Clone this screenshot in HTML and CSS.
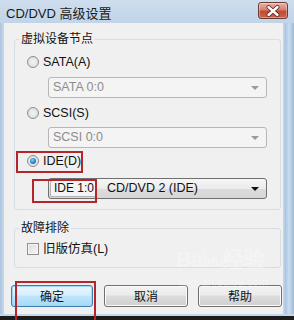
FILE: index.html
```html
<!DOCTYPE html>
<html lang="zh-CN">
<head>
<meta charset="utf-8">
<title>CD/DVD 高级设置</title>
<link rel="stylesheet" href="styles.css">
</head>
<body>
<div class="window">
  <div class="titlebar">
    <span class="title">CD/DVD 高级设置</span>
    <span class="close">
      <svg width="30" height="16" viewBox="0 0 30 16">
        <path d="M10.5 4 L19.5 12 M19.5 4 L10.5 12" stroke="#5a1e1a" stroke-width="4" stroke-linecap="round"/>
        <path d="M10.5 4 L19.5 12 M19.5 4 L10.5 12" stroke="#ffffff" stroke-width="2.4" stroke-linecap="round"/>
      </svg>
    </span>
  </div>
  <div class="client">
    <fieldset class="group g1">
      <legend>虚拟设备节点</legend>
      <label class="opt o1"><span class="radio"></span>SATA(A)</label>
      <div class="combo disabled c1"><span class="ctext">SATA 0:0</span><span class="arrow"></span></div>
      <label class="opt o2"><span class="radio"></span>SCSI(S)</label>
      <div class="combo disabled c2"><span class="ctext">SCSI 0:0</span><span class="arrow"></span></div>
      <label class="opt o3"><span class="radio on"></span>IDE(D)</label>
      <div class="combo c3"><span class="seg">IDE 1:0</span><span class="ctext dev">CD/DVD 2 (IDE)</span><span class="arrow"></span></div>
    </fieldset>
    <fieldset class="group g2">
      <legend>故障排除</legend>
      <label class="opt o4"><span class="check"></span>旧版仿真(L)</label>
    </fieldset>
    <div class="buttons">
      <button class="btn ok">确定</button>
      <button class="btn cancel">取消</button>
      <button class="btn help">帮助</button>
    </div>
  </div>
  <div class="bottom"></div>
  <div class="watermark"><span class="wm-big">Bai<span class="paw">du</span>经验</span><span class="wm-small">jingyan.baidu.com</span></div>
  <div class="mark m1"></div>
  <div class="mark m2"></div>
  <div class="mark m3"></div>
</div>
</body>
</html>
```
FILE: styles.css
```css
* { box-sizing: border-box; }
html, body { margin: 0; padding: 0; background: #bcd3ea; }
body { font-family: "Liberation Sans", "Noto Sans CJK SC", sans-serif; font-size: 12px; color: #111; }

.window {
  position: relative;
  width: 294px;
  height: 320px;
  display: flex;
  flex-direction: column;
  background: linear-gradient(90deg, #a9c2dc 0, #c3d6ea 3px, #c3d6ea 284px, #a8c4e0 285px, #c9dcef 289px, #9fb9d4 294px);
  overflow: hidden;
}

.titlebar {
  height: 23px;
  flex: none;
  display: flex;
  align-items: center;
  justify-content: space-between;
  padding-left: 6px;
  padding-right: 6px;
  background: linear-gradient(#cfdeee, #c0d3e8);
}
.title { font-size: 13px; color: #1a1a1a; margin-top: 1px; }
.close {
  width: 30px;
  height: 17px;
  margin-top: -2px;
  border: 1px solid #6b3a35;
  border-radius: 3px;
  background: linear-gradient(#e9b3a6 0%, #d4806e 45%, #c14a34 55%, #c9644c 100%);
  display: flex;
  align-items: center;
  justify-content: center;
  box-shadow: inset 0 0 0 1px rgba(255,255,255,0.35);
}
.close svg { display: block; margin: -1px; }

.client {
  flex: none;
  height: 291px;
  margin: 0 11px 0 4px;
  background: #f0f0f0;
  display: flex;
  flex-direction: column;
}

.group {
  margin: 8px 2px 0 10px;
  padding: 0 0 10px 0;
  border: 1px solid #d6dde3;
  border-radius: 3px;
  min-width: 0;
  display: flex;
  flex-direction: column;
}
.group legend {
  margin-left: 4px;
  padding: 0 2px;
  line-height: 16px;
  height: 16px;
  font-size: 12px;
  color: #111;
}
.g2 { margin-top: 10px; padding-bottom: 9px; }

.opt {
  display: flex;
  align-items: center;
  height: 18px;
  margin-left: 12px;
  line-height: 18px;
  font-size: 12.5px;
}
.o1 { margin-top: 6px; }
.o2 { margin-top: 6px; }
.o3 { margin-top: 4px; }
.o4 { margin-top: 4px; }

.radio {
  width: 12px;
  height: 12px;
  margin-right: 4px;
  border-radius: 50%;
  border: 1px solid #8e8f8f;
  background: radial-gradient(circle at 50% 50%, #f4f4f4 0, #e4e4e4 55%, #d3d3d3 100%);
  display: flex;
  align-items: center;
  justify-content: center;
}
.radio.on::after {
  content: "";
  width: 6px;
  height: 6px;
  border-radius: 50%;
  background: radial-gradient(circle at 40% 35%, #8fd1f5 0, #2a8ad4 50%, #0d4f8e 100%);
}
.check {
  width: 12px;
  height: 12px;
  margin-right: 4px;
  border: 1px solid #8e8f8f;
  background: linear-gradient(135deg, #dcdcdc, #f6f6f6);
  box-shadow: inset 0 0 0 1px #f4f4f4;
}

.combo {
  position: relative;
  margin-left: 33px;
  width: 219px;
  height: 21px;
  border-radius: 3px;
  display: flex;
  align-items: center;
  padding-left: 4px;
  font-size: 12.5px;
}
.c1 { margin-top: 6px; }
.c2 { margin-top: 5px; }
.c3 { margin-top: 8px; }
.combo.disabled {
  border: 1px solid #b7b7b7;
  background: #f4f4f4;
  color: #8d8d8d;
}
.combo.c3 {
  border: 1px solid #707070;
  background: linear-gradient(#f6f6f6 0%, #ebebeb 50%, #dcdcdc 52%, #d6d6d6 100%);
  padding-left: 1px;
  color: #111;
}
.ctext { line-height: 19px; }
.seg {
  height: 17px;
  line-height: 15px;
  padding: 0 2px 0 3px;
  border: 1px solid #b4b4b4;
  border-radius: 2px;
  background: #f4f4f4;
  font-size: 12px;
}
.dev { margin-left: 10px; }
.arrow {
  position: absolute;
  right: 7px;
  top: 8px;
  width: 0;
  height: 0;
  border-left: 4px solid transparent;
  border-right: 4px solid transparent;
  border-top: 4px solid #9a9a9a;
}
.c3 .arrow { border-top-color: #111; }

.buttons {
  display: flex;
  margin-top: 17px;
  padding-left: 7px;
}
.btn {
  height: 22px;
  font-family: "Noto Sans CJK SC", sans-serif;
  font-size: 12px;
  color: #111;
  border-radius: 3px;
  padding: 0;
  line-height: 18px;
}
.ok {
  width: 82px;
  border: 1px solid #3c7fb1;
  background: linear-gradient(#eaf6fd 0%, #d9f0fc 45%, #bee6fd 50%, #a7d9f5 100%);
  box-shadow: inset 0 0 0 1px #9ed7f7;
}
.cancel, .help {
  width: 84px;
  border: 1px solid #707070;
  background: linear-gradient(#f2f2f2 0%, #ebebeb 45%, #dddddd 50%, #cfcfcf 100%);
  box-shadow: inset 0 0 0 1px #fbfbfb;
}
.cancel { margin-left: 11px; }
.help { margin-left: 10px; }

.bottom {
  flex: 1;
  background: linear-gradient(#c3d6ea 0, #c3d6ea 2px, #1c1c1c 2px);
}

.mark {
  position: absolute;
  border: 2px solid #b5252a;
}
.m1 { left: 16px; top: 151px; width: 67px; height: 22px; }
.m2 { left: 32px; top: 179px; width: 65px; height: 24px; }
.m3 { left: 15px; top: 281px; width: 81px; height: 45px; }

.watermark {
  position: absolute;
  left: 176px;
  top: 246px;
  display: flex;
  flex-direction: column;
  color: rgba(255,255,255,0.3);
  pointer-events: none;
}
.wm-big { font-family: "Liberation Sans", sans-serif; font-weight: bold; font-size: 22px; line-height: 28px; letter-spacing: -1px; }
.paw { font-size: 14px; }
.wm-small { font-family: "Liberation Sans", sans-serif; font-size: 11px; line-height: 12px; margin-left: 3px; }
```
